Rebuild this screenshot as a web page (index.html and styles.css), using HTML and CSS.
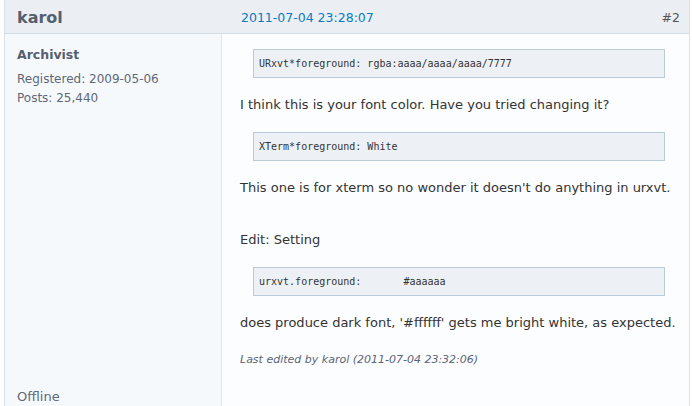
FILE: index.html
```html
<!DOCTYPE html>
<html>
<head>
<meta charset="utf-8">
<link rel="stylesheet" href="styles.css">
</head>
<body>
<div class="blockpost">
  <div class="posthead">
    <span class="author">karol</span>
    <a class="postdate" href="#">2011-07-04 23:28:07</a>
    <span class="postnum">#2</span>
  </div>
  <div class="postbody">
    <div class="postleft">
      <div class="usertitle">Archivist</div>
      <div class="userinfo">Registered: 2009-05-06</div>
      <div class="userinfo">Posts: 25,440</div>
    </div>
    <div class="postright">
      <pre class="code">URxvt*foreground: rgba:aaaa/aaaa/aaaa/7777</pre>
      <p>I think this is your font color. Have you tried changing it?</p>
      <pre class="code">XTerm*foreground: White</pre>
      <p>This one is for xterm so no wonder it doesn't do anything in urxvt.<br><br>Edit: Setting</p>
      <pre class="code">urxvt.foreground:       #aaaaaa</pre>
      <p>does produce dark font, '#ffffff' gets me bright white, as expected.</p>
      <p class="edited">Last edited by karol (2011-07-04 23:32:06)</p>
    </div>
    <div class="footleft">Offline</div>
    <div class="footright"></div>
  </div>
</div>
</body>
</html>
```

FILE: styles.css
```css
html, body {
  margin: 0;
  padding: 0;
  background: #ffffff;
}
body {
  font-family: "DejaVu Sans", sans-serif;
  font-size: 13px;
  color: #333333;
}
.blockpost {
  margin-left: 4px;
  width: 684px;
  border-left: 1px solid #d9e2ea;
  border-right: 1px solid #d9e2ea;
}
.posthead {
  display: flex;
  align-items: center;
  box-sizing: border-box;
  height: 34px;
  background: #ebeff3;
  border-bottom: 1px solid #d3dde6;
  padding: 1px 9px 0 12px;
}
.author {
  font-weight: bold;
  font-size: 16px;
  color: #555f70;
  width: 224px;
}
.postdate {
  color: #0a7bc2;
  font-size: 12.5px;
  text-decoration: none;
  flex: 1;
}
.postnum {
  color: #555555;
  font-size: 12.5px;
}
.postbody {
  display: grid;
  grid-template-columns: 217px 1fr;
}
.postleft {
  background: #f6f9fc;
  border-right: 1px solid #dfe7ee;
  padding: 11px 12px 0;
  color: #5f6877;
}
.usertitle {
  font-weight: bold;
  font-size: 12.5px;
  color: #555f70;
  line-height: 20px;
  margin-bottom: 5px;
}
.userinfo {
  font-size: 12px;
  line-height: 19px;
}
.postright {
  background: #fcfdfe;
  padding: 15px 8px 10px 18px;
}
.code {
  margin: 0 16px 0 13px;
  padding: 7px 5px 6px;
  background: #edf1f5;
  border: 1px solid #bccbd9;
  font-family: "DejaVu Sans Mono", monospace;
  font-size: 10px;
  line-height: 14px;
  color: #333333;
  white-space: pre;
}
.postright p {
  margin: 14px 0;
  line-height: 26px;
}
.postright p.edited {
  margin: 1px 0 0;
  font-style: italic;
  font-size: 11px;
  line-height: 20px;
  color: #5a6479;
}
.footleft {
  background: #f6f9fc;
  border-right: 1px solid #dfe7ee;
  padding: 7px 12px 20px;
  line-height: 20px;
  color: #5f6877;
}
.footright {
  background: #fcfdfe;
}
```
